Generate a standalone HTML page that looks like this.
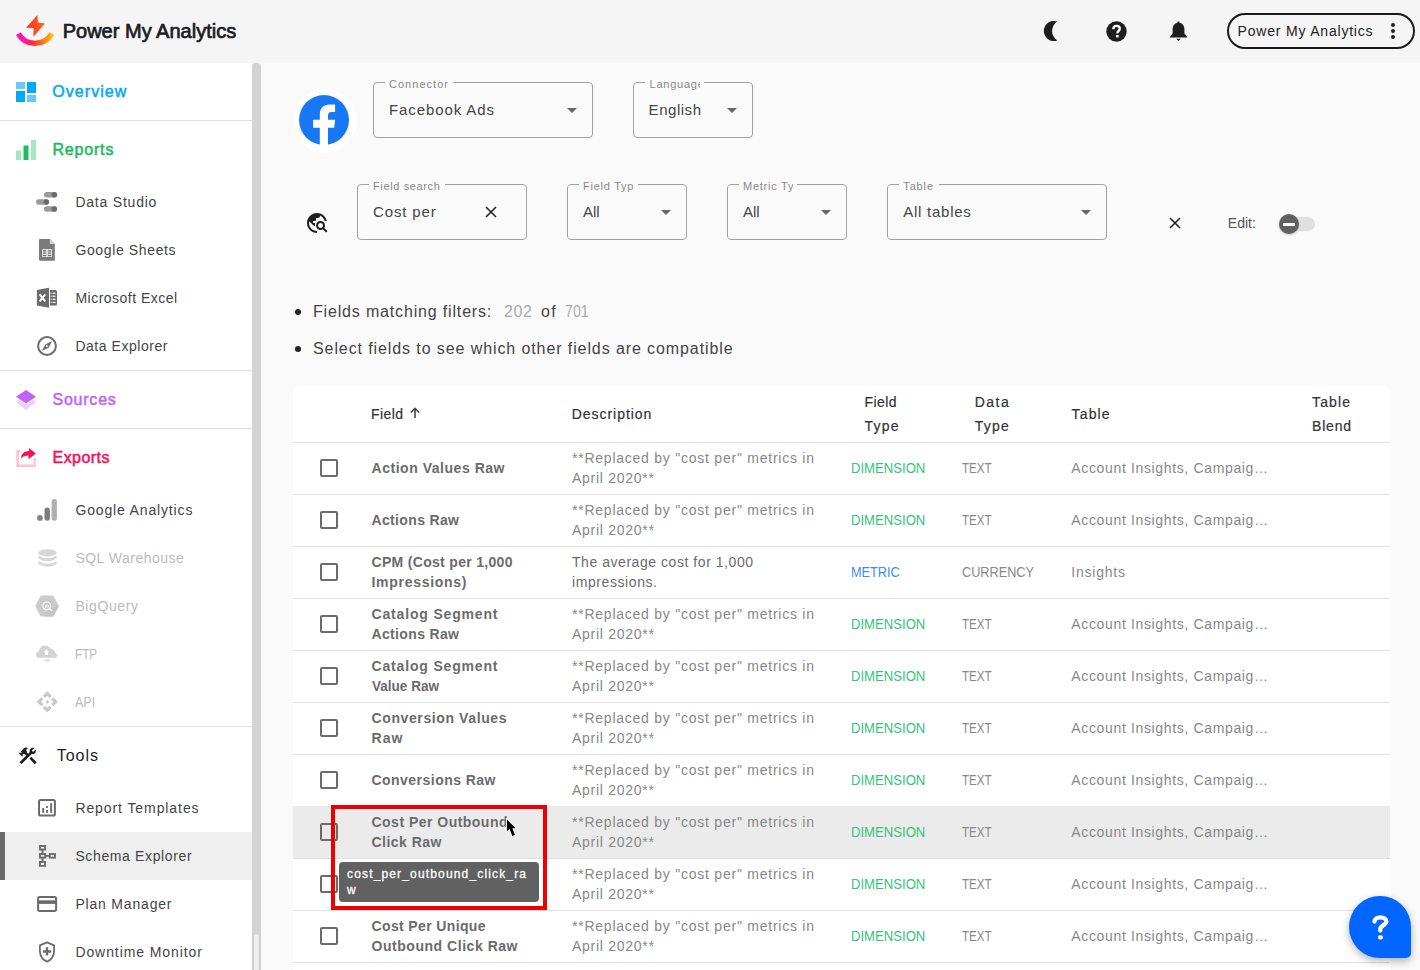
<!DOCTYPE html>
<html><head><meta charset="utf-8"><style>
html,body{margin:0;padding:0;}
body{width:1420px;height:970px;overflow:hidden;position:relative;background:#fafafa;font-family:"Liberation Sans",sans-serif;}
.t{position:absolute;white-space:pre;line-height:1;}
.a{position:absolute;}
</style></head><body>
<!-- header -->
<div class="a" style="left:0;top:0;width:1420px;height:63px;background:#f5f5f5"></div>
<svg class="a" style="left:14px;top:13px" width="44" height="36" viewBox="0 0 44 36">
 <defs><linearGradient id="lg1" x1="0" y1="0" x2="1" y2="0"><stop offset="0" stop-color="#ff0fd0"/><stop offset="0.45" stop-color="#ff2a3a"/><stop offset="1" stop-color="#ffb800"/></linearGradient>
 <linearGradient id="lg2" x1="0" y1="0" x2="1" y2="0"><stop offset="0" stop-color="#ff2d2d"/><stop offset="1" stop-color="#ff6a10"/></linearGradient></defs>
 <path d="M4.3 20.6 A19.2 19.2 0 0 0 37.7 20.6" stroke="url(#lg1)" stroke-width="5.4" fill="none"/>
 <path d="M23.5 1.9 L23.9 9.6 L31 10.4 L19.4 23.7 L19.6 14.9 L12.1 14.7 Z" fill="url(#lg2)"/>
</svg>
<!-- moon -->
<svg class="a" style="left:1042px;top:21px" width="17" height="20" viewBox="0 0 17 20"><path d="M15.2 0.6 A10 10 0 1 0 15.2 19.4 A11.2 11.2 0 0 1 15.2 0.6 Z" fill="#1e1e1e"/></svg>
<!-- help -->
<svg class="a" style="left:1106px;top:21px" width="21" height="21" viewBox="0 0 21 21"><circle cx="10.5" cy="10.5" r="10.2" fill="#1e1e1e"/>
<path d="M7.3 8.2 C7.3 6 8.8 4.9 10.6 4.9 C12.5 4.9 13.8 6.1 13.8 7.7 C13.8 9.7 11.4 10 11.4 12.2" stroke="#fff" stroke-width="2.3" fill="none"/><rect x="10.1" y="13.9" width="2.6" height="2.5" fill="#fff"/></svg>
<!-- bell -->
<svg class="a" style="left:1169px;top:21px" width="19" height="21" viewBox="0 0 19 21"><path d="M9.5 0.5 C10.3 0.5 10.6 1 10.6 1.8 C13.5 2.4 15.4 5 15.4 8 L15.4 12.5 L18.4 16.6 L0.6 16.6 L3.6 12.5 L3.6 8 C3.6 5 5.5 2.4 8.4 1.8 C8.4 1 8.7 0.5 9.5 0.5 Z" fill="#1e1e1e"/><path d="M7.3 17.8 L11.7 17.8 L9.5 20 Z" fill="#1e1e1e"/></svg>
<!-- account pill -->
<div class="a" style="left:1227px;top:13px;width:184px;height:32px;border:2px solid #1a1a1a;border-radius:18px"></div>
<div class="a" style="left:1391px;top:23px;width:4px;height:4px;border-radius:50%;background:#222"></div>
<div class="a" style="left:1391px;top:29px;width:4px;height:4px;border-radius:50%;background:#222"></div>
<div class="a" style="left:1391px;top:35px;width:4px;height:4px;border-radius:50%;background:#222"></div>

<!-- sidebar -->
<div class="a" style="left:0;top:63px;width:252px;height:907px;background:#fff"></div>
<div class="a" style="left:252px;top:63px;width:9px;height:870px;background:#d3d3d3;border-radius:4px 4px 0 0"></div>
<div class="a" style="left:252px;top:933px;width:9px;height:37px;background:#d0d0d0"></div>
<div class="a" style="left:254px;top:934px;width:5px;height:36px;background:#eeeeee;border-radius:2px 2px 0 0"></div>
<div class="a" style="left:0;top:120px;width:252px;height:1px;background:#e0e0e0"></div>
<div class="a" style="left:0;top:370px;width:252px;height:1px;background:#e0e0e0"></div>
<div class="a" style="left:0;top:428px;width:252px;height:1px;background:#e0e0e0"></div>
<div class="a" style="left:0;top:726px;width:252px;height:1px;background:#e0e0e0"></div>
<div class="a" style="left:0;top:832px;width:252px;height:48px;background:#efefef"></div>
<div class="a" style="left:0;top:832px;width:5px;height:48px;background:#6b6b6b"></div>

<!-- overview icon -->
<svg class="a" style="left:16px;top:82px" width="20" height="20" viewBox="0 0 20 20">
<rect x="0" y="0" width="9" height="7" fill="#6ac7fc"/><rect x="11" y="0" width="9" height="11" fill="#03a9f4"/>
<rect x="0" y="9" width="9" height="11" fill="#03a9f4"/><rect x="11" y="13" width="9" height="7" fill="#6ac7fc"/></svg>
<!-- reports icon -->
<svg class="a" style="left:16px;top:140px" width="20" height="20" viewBox="0 0 20 20">
<rect x="0" y="10.5" width="5" height="9.5" fill="#a3e6c0"/><rect x="7.5" y="5.5" width="5" height="14.5" fill="#1ebd63"/><rect x="15" y="0" width="5" height="20" fill="#a3e6c0"/></svg>
<!-- data studio -->
<svg class="a" style="left:36px;top:192px" width="22" height="20" viewBox="0 0 22 20">
<rect x="8" y="0" width="13" height="5.5" rx="2.75" fill="#9a9a9a"/><circle cx="18.3" cy="2.75" r="2.75" fill="#6b6b6b"/>
<rect x="0" y="7.2" width="13" height="5.5" rx="2.75" fill="#9a9a9a"/><circle cx="10.3" cy="9.95" r="2.75" fill="#6b6b6b"/>
<rect x="8" y="14.3" width="13" height="5.5" rx="2.75" fill="#9a9a9a"/><circle cx="18.3" cy="17.05" r="2.75" fill="#6b6b6b"/></svg>
<!-- google sheets -->
<svg class="a" style="left:39px;top:239px" width="16" height="22" viewBox="0 0 16 22">
<path d="M1.2 0 L10.9 0 L15.8 5.1 L15.8 20.5 Q15.8 21.7 14.6 21.7 L1.2 21.7 Q0 21.7 0 20.5 L0 1.2 Q0 0 1.2 0 Z" fill="#7a7a7a"/><path d="M10.9 0 L15.8 5.1 L10.9 5.1 Z" fill="#d4d4d4"/>
<rect x="3.1" y="10" width="10" height="7.9" rx="0.5" fill="#e6e6e6"/><rect x="4" y="11.2" width="3.3" height="1.3" fill="#6a6a6a"/><rect x="8.9" y="11.2" width="3.3" height="1.3" fill="#6a6a6a"/>
<rect x="4" y="13.4" width="3.3" height="1.6" fill="#8a8a8a"/><rect x="8.9" y="13.4" width="3.3" height="1.6" fill="#8a8a8a"/><rect x="4" y="16" width="3.3" height="1.2" fill="#6a6a6a"/><rect x="8.9" y="16" width="3.3" height="1.2" fill="#6a6a6a"/></svg>
<!-- excel -->
<svg class="a" style="left:36px;top:287px" width="22" height="22" viewBox="0 0 22 22">
<path d="M0.9 2.9 L13 0.8 L13 20.7 L0.9 18.6 Z" fill="#6b6b6b"/><path d="M14 2.9 L19.5 2.9 Q21 2.9 21 4.4 L21 17.1 Q21 18.6 19.5 18.6 L14 18.6 Z" fill="#6b6b6b"/>
<g fill="#fff"><rect x="14.6" y="5.6" width="1" height="1.2"/><rect x="16.6" y="5.6" width="2.9" height="1.2"/><rect x="14.6" y="8.6" width="1" height="1.2"/><rect x="16.6" y="8.6" width="2.9" height="1.2"/>
<rect x="14.6" y="11.7" width="1" height="1.2"/><rect x="16.6" y="11.7" width="2.9" height="1.2"/><rect x="14.6" y="14.8" width="1" height="1.2"/><rect x="16.6" y="14.8" width="2.9" height="1.2"/></g>
<path d="M3.6 7.4 L9.2 14.4 M9.2 7.4 L3.6 14.4" stroke="#fff" stroke-width="2"/></svg>
<!-- data explorer compass -->
<svg class="a" style="left:37px;top:336px" width="20" height="20" viewBox="0 0 20 20">
<circle cx="10" cy="10" r="8.9" stroke="#6b6b6b" stroke-width="2" fill="none"/><path d="M15 5.1 L11.6 11.8 L4.8 15 L8.2 8.4 Z" fill="#6b6b6b"/><circle cx="9.9" cy="10.1" r="1" fill="#fff"/></svg>
<!-- sources -->
<svg class="a" style="left:15px;top:389px" width="23" height="22" viewBox="0 0 23 22">
<path d="M1 13 L11 6.2 L21.2 13 L11 21 Z" fill="#ecd0fd"/><path d="M-0.2 7.7 L11 0 L22.4 7.7 L11 15.6 Z" fill="#fff"/><path d="M1.1 7.7 L11 0.9 L21 7.7 L11 14.5 Z" fill="#c062fb"/></svg>
<!-- exports -->
<svg class="a" style="left:16px;top:447px" width="21" height="21" viewBox="0 0 21 21">
<g fill="#ffc2d6"><rect x="0.4" y="3.2" width="2.5" height="16.8"/><rect x="0.4" y="3.2" width="4.2" height="2.3"/><rect x="0.4" y="17.5" width="19.4" height="2.5"/><rect x="17.3" y="11.3" width="2.5" height="8.7"/></g>
<path d="M5 11.6 C5.2 6.5 8.5 4.2 13.1 4.1 L13.1 0.9 L19.8 6.4 L12.5 12.2 L12.5 8.6 C9 8.6 6.8 9.4 5 11.6 Z" fill="#ff0a54"/></svg>
<!-- google analytics -->
<svg class="a" style="left:37px;top:499px" width="21" height="22" viewBox="0 0 21 22">
<circle cx="2.9" cy="18.9" r="2.9" fill="#848484"/><rect x="7.5" y="8.4" width="5.4" height="13.3" rx="2.7" fill="#7c7c7c"/><rect x="14.6" y="0.1" width="5.3" height="21.6" rx="2.65" fill="#b0b0b0"/></svg>
<!-- sql -->
<svg class="a" style="left:38px;top:549px" width="19" height="19" viewBox="0 0 19 19">
<ellipse cx="9.5" cy="3.8" rx="9.2" ry="3.6" fill="#d6d6d6"/><path d="M0.3 6.5 Q9.5 12 18.7 6.5 L18.7 9.5 Q9.5 15 0.3 9.5 Z" fill="#d6d6d6"/><path d="M0.3 12.2 Q9.5 17.5 18.7 12.2 L18.7 15 Q9.5 20.5 0.3 15 Z" fill="#d6d6d6"/></svg>
<!-- bigquery -->
<svg class="a" style="left:35px;top:595px" width="24" height="22" viewBox="0 0 24 22">
<path d="M0.2 11 L5.8 0.5 L18.2 0.5 L23.9 11 L18.2 21.5 L5.8 21.5 Z" fill="#cbcbcb"/><path d="M14.5 13.5 L23.9 11 L18.2 21.5 L9 21.5 Z" fill="#c4c4c4"/>
<circle cx="11.7" cy="10.8" r="3.8" stroke="#fff" stroke-width="1.1" fill="#c8c8c8"/><path d="M14.4 13.5 L16.8 15.8" stroke="#fff" stroke-width="1.2" stroke-linecap="round"/>
<rect x="10" y="10.6" width="0.9" height="2" fill="#fff"/><rect x="11.4" y="9.3" width="0.9" height="3.3" fill="#fff"/><rect x="12.8" y="10.1" width="0.9" height="2.5" fill="#fff"/></svg>
<!-- ftp -->
<svg class="a" style="left:36px;top:645px" width="22" height="18" viewBox="0 0 22 18">
<path d="M3 12.7 C1.3 12.7 0 11.4 0 9.7 C0 8 1.2 6.7 2.8 6.5 C3.3 3 5.8 0.4 8.8 0.4 C11.3 0.4 13.3 1.8 14.3 3.4 C17 3.5 18.7 5.5 19 7.8 C20.3 8.3 21.2 9.4 21.2 10.5 C21.2 11.8 20.2 12.7 18.8 12.7 Z" fill="#d2d2d2"/>
<path d="M10.5 3.8 L13 7 L12 7 L12 10 L8.9 10 L8.9 7 L7.8 7 Z" fill="#fff"/><rect x="8.2" y="14.2" width="5.6" height="2.6" fill="#e4e4e4"/></svg>
<!-- api -->
<svg class="a" style="left:36px;top:690px" width="23" height="24" viewBox="0 0 23 24"><path d="M11.30 1.20 L6.80 5.70 L9.10 7.95 L11.30 5.75 L13.50 7.95 L15.80 5.70 Z M21.90 11.80 L17.40 7.30 L15.15 9.60 L17.35 11.80 L15.15 14.00 L17.40 16.30 Z M11.30 22.40 L15.80 17.90 L13.50 15.65 L11.30 17.85 L9.10 15.65 L6.80 17.90 Z M0.70 11.80 L5.20 16.30 L7.45 14.00 L5.25 11.80 L7.45 9.60 L5.20 7.30 Z M11.3 9.9 L13.200000000000001 11.8 L11.3 13.700000000000001 L9.4 11.8 Z" fill="#c8c8c8"/></svg>
<!-- tools -->
<svg class="a" style="left:16.7px;top:744.5px" width="21.6" height="21.6" viewBox="0 0 24 24"><path fill="#1e1e1e" d="M13.78 15.3L19.78 21.3L21.89 19.14L15.89 13.14L13.78 15.3M17.5 10.1C17.11 10.1 16.69 10.05 16.36 9.91L4.97 21.25L2.86 19.14L10.27 11.74L8.5 9.96L7.78 10.66L6.33 9.25V12.11L5.63 12.81L2.11 9.25L2.81 8.55H5.62L4.22 7.14L7.78 3.58C8.95 2.41 10.83 2.41 12 3.58L9.89 5.740L11.3 7.14L10.59 7.85L12.38 9.63L14.2 7.75C14.06 7.42 14 7 14 6.63C14 4.66 15.56 3.11 17.5 3.11C18.09 3.11 18.61 3.25 19.08 3.53L16.41 6.2L17.91 7.7L20.58 5.03C20.86 5.5 21 6 21 6.63C21 8.55 19.45 10.1 17.5 10.1Z"/></svg>
<!-- report templates -->
<svg class="a" style="left:38px;top:799px" width="18" height="18" viewBox="0 0 18 18">
<rect x="1" y="1" width="15.9" height="15.6" rx="1.6" stroke="#6b6b6b" stroke-width="2" fill="none"/><rect x="4.2" y="9.1" width="1.9" height="4.7" fill="#6b6b6b"/><rect x="8.1" y="11" width="1.9" height="2.8" fill="#6b6b6b"/><rect x="8.1" y="7.1" width="1.9" height="1.9" fill="#6b6b6b"/><rect x="12.2" y="4.2" width="1.9" height="9.6" fill="#6b6b6b"/></svg>
<!-- schema explorer -->
<svg class="a" style="left:38px;top:844px" width="19" height="24" viewBox="0 0 19 24">
<g stroke="#6b6b6b" stroke-width="1.9" fill="none"><rect x="1.95" y="1.95" width="5.2" height="3.6"/><rect x="1.95" y="10.05" width="5.2" height="3.6"/><rect x="1.95" y="17.95" width="5.2" height="3.9"/><rect x="11.75" y="10.05" width="5.2" height="3.6"/>
<path d="M4.5 5.5 L4.5 10 M4.5 13.6 L4.5 18 M7.1 11.85 L11.8 11.85"/></g></svg>
<!-- plan manager -->
<svg class="a" style="left:37px;top:895px" width="21" height="18" viewBox="0 0 21 18">
<rect x="1.1" y="1.9" width="18" height="14" rx="1.6" stroke="#6b6b6b" stroke-width="2" fill="none"/><rect x="1" y="5.3" width="18.2" height="3.6" fill="#6b6b6b"/></svg>
<!-- downtime monitor shield -->
<svg class="a" style="left:38px;top:941px" width="18" height="22" viewBox="0 0 18 22">
<path d="M9 1.3 L16.1 4.3 L16.1 10.3 C16.1 15 13.1 19.3 9 20.6 C4.9 19.3 1.9 15 1.9 10.3 L1.9 4.3 Z" stroke="#6b6b6b" stroke-width="1.8" fill="none" stroke-linejoin="round"/><path d="M7.8 6.2 L10.2 6.2 L10.2 9.3 L13.2 9.3 L13.2 11.7 L10.2 11.7 L10.2 14.4 L7.8 14.4 L7.8 11.7 L5 11.7 L5 9.3 L7.8 9.3 Z" fill="#6b6b6b"/></svg>

<!-- facebook -->
<div class="a" style="left:293px;top:88.5px;width:64px;height:64px;border-radius:50%;background:#fff"></div>
<svg class="a" style="left:299px;top:95px" width="50" height="50" viewBox="0 0 50 50">
<circle cx="25" cy="25" r="25" fill="#1877f2"/>
<path d="M29 50 L29 32.8 L35.2 32.8 L36.1 24.8 L29 24.8 L29 20.5 C29 18.6 30 17 32.5 17 L36.1 17 L36.1 9.6 C36.1 9.6 33 9.4 31 9.4 C24.8 9.4 20.8 13 20.8 19.5 L20.8 24.8 L14.1 24.8 L14.1 32.8 L20.8 32.8 L20.8 50 Z" fill="#fff"/></svg>

<!-- outlined fields -->
<div class="a" style="left:373px;top:82px;width:218px;height:54px;border:1px solid #a0a0a0;border-radius:4px"></div>
<div class="a" style="left:384.5px;top:79px;width:68.0px;height:6px;background:#fafafa"></div>
<div class="a" style="left:633px;top:82px;width:118px;height:54px;border:1px solid #a0a0a0;border-radius:4px"></div>
<div class="a" style="left:644.9px;top:79px;width:59.200000000000045px;height:6px;background:#fafafa"></div>
<div class="a" style="left:649.6px;top:75.9px;width:50.1px;height:17px;overflow:hidden"><span style="position:absolute;left:0;top:3px;font-size:11px;line-height:1;color:#888;white-space:pre;letter-spacing:0.75px">Language</span></div>
<div class="a" style="left:357px;top:184px;width:168px;height:54px;border:1px solid #a0a0a0;border-radius:4px"></div>
<div class="a" style="left:368.5px;top:181px;width:76.0px;height:6px;background:#fafafa"></div>
<div class="a" style="left:567px;top:184px;width:118px;height:54px;border:1px solid #a0a0a0;border-radius:4px"></div>
<div class="a" style="left:578.5px;top:181px;width:59.5px;height:6px;background:#fafafa"></div>
<div class="a" style="left:583px;top:177.9px;width:50.8px;height:17px;overflow:hidden"><span style="position:absolute;left:0;top:3px;font-size:11px;line-height:1;color:#888;white-space:pre;letter-spacing:0.75px">Field Type</span></div>
<div class="a" style="left:727px;top:184px;width:118px;height:54px;border:1px solid #a0a0a0;border-radius:4px"></div>
<div class="a" style="left:738.5px;top:181px;width:58.5px;height:6px;background:#fafafa"></div>
<div class="a" style="left:743px;top:177.9px;width:49.8px;height:17px;overflow:hidden"><span style="position:absolute;left:0;top:3px;font-size:11px;line-height:1;color:#888;white-space:pre;letter-spacing:0.75px">Metric Type</span></div>
<div class="a" style="left:887px;top:184px;width:218px;height:54px;border:1px solid #a0a0a0;border-radius:4px"></div>
<div class="a" style="left:898.5px;top:181px;width:40.0px;height:6px;background:#fafafa"></div>
<!-- dropdown arrows -->
<svg class="a" style="left:567px;top:108px" width="10" height="5"><path d="M0 0 L10 0 L5 5 Z" fill="#666"/></svg>
<svg class="a" style="left:727px;top:108px" width="10" height="5"><path d="M0 0 L10 0 L5 5 Z" fill="#666"/></svg>
<svg class="a" style="left:661px;top:210px" width="10" height="5"><path d="M0 0 L10 0 L5 5 Z" fill="#666"/></svg>
<svg class="a" style="left:821px;top:210px" width="10" height="5"><path d="M0 0 L10 0 L5 5 Z" fill="#666"/></svg>
<svg class="a" style="left:1081px;top:210px" width="10" height="5"><path d="M0 0 L10 0 L5 5 Z" fill="#666"/></svg>
<!-- clear X in search -->
<svg class="a" style="left:485px;top:206px" width="12" height="12"><path d="M1 1 L11 11 M11 1 L1 11" stroke="#222" stroke-width="1.6"/></svg>
<!-- close X -->
<svg class="a" style="left:1169px;top:217px" width="12" height="12"><path d="M1 1 L11 11 M11 1 L1 11" stroke="#222" stroke-width="1.6"/></svg>
<!-- search-globe icon -->
<svg class="a" style="left:305.4px;top:211.1px" width="24" height="24" viewBox="0 0 24 24"><path fill="#1e1e1e" d="M19.3 16.9c.4-.7.7-1.5.7-2.4 0-2.5-2-4.5-4.5-4.5S11 12 11 14.5s2 4.5 4.5 4.5c.9 0 1.7-.3 2.4-.7l3.2 3.2 1.4-1.4-3.2-3.2zm-3.8.1c-1.4 0-2.5-1.1-2.5-2.5s1.1-2.5 2.5-2.5 2.5 1.1 2.5 2.5-1.1 2.5-2.5 2.5zM12 20v2C6.48 22 2 17.52 2 12S6.48 2 12 2c4.84 0 8.87 3.44 9.8 8h-2.07c-.64-2.46-2.4-4.47-4.73-5.41V5c0 1.1-.9 2-2 2h-2v2c0 .55-.45 1-1 1H8v2h2v3H9l-4.79-4.79C4.08 10.79 4 11.38 4 12c0 4.41 3.59 8 8 8z"/></svg>
<!-- toggle -->
<div class="a" style="left:1281px;top:217px;width:34px;height:14px;border-radius:7px;background:#e0e0e0"></div>
<div class="a" style="left:1279px;top:214px;width:20px;height:20px;border-radius:50%;background:#616161;box-shadow:0 1px 2px rgba(0,0,0,0.25)"></div>
<div class="a" style="left:1283px;top:222.5px;width:12px;height:3px;background:#fff"></div>

<!-- bullets -->
<div class="a" style="left:295px;top:309px;width:6px;height:6px;border-radius:50%;background:#222"></div>
<div class="a" style="left:295px;top:345.5px;width:6px;height:6px;border-radius:50%;background:#222"></div>

<!-- table card -->
<div class="a" style="left:293px;top:386px;width:1098px;height:600px;background:#fff;border-radius:8px"></div>
<div class="a" style="left:293px;top:442px;width:1097px;height:1px;background:#e0e0e0"></div>
<svg class="a" style="left:409px;top:407px" width="12" height="12" viewBox="0 0 12 12"><path d="M6 11 L6 1.5 M1.8 5.5 L6 1.3 L10.2 5.5" stroke="#444" stroke-width="1.6" fill="none"/></svg>
<div class="a" style="left:293px;top:494px;width:1097px;height:1px;background:#e0e0e0"></div>
<div class="a" style="left:320px;top:459px;width:14px;height:14px;border:2px solid #6b6b6b;border-radius:2px"></div>
<div class="a" style="left:293px;top:546px;width:1097px;height:1px;background:#e0e0e0"></div>
<div class="a" style="left:320px;top:511px;width:14px;height:14px;border:2px solid #6b6b6b;border-radius:2px"></div>
<div class="a" style="left:293px;top:598px;width:1097px;height:1px;background:#e0e0e0"></div>
<div class="a" style="left:320px;top:563px;width:14px;height:14px;border:2px solid #6b6b6b;border-radius:2px"></div>
<div class="a" style="left:293px;top:650px;width:1097px;height:1px;background:#e0e0e0"></div>
<div class="a" style="left:320px;top:615px;width:14px;height:14px;border:2px solid #6b6b6b;border-radius:2px"></div>
<div class="a" style="left:293px;top:702px;width:1097px;height:1px;background:#e0e0e0"></div>
<div class="a" style="left:320px;top:667px;width:14px;height:14px;border:2px solid #6b6b6b;border-radius:2px"></div>
<div class="a" style="left:293px;top:754px;width:1097px;height:1px;background:#e0e0e0"></div>
<div class="a" style="left:320px;top:719px;width:14px;height:14px;border:2px solid #6b6b6b;border-radius:2px"></div>
<div class="a" style="left:293px;top:806px;width:1097px;height:1px;background:#e0e0e0"></div>
<div class="a" style="left:320px;top:771px;width:14px;height:14px;border:2px solid #6b6b6b;border-radius:2px"></div>
<div class="a" style="left:293px;top:806px;width:1097px;height:52px;background:#ebebeb"></div>
<div class="a" style="left:293px;top:858px;width:1097px;height:1px;background:#e0e0e0"></div>
<div class="a" style="left:320px;top:823px;width:14px;height:14px;border:2px solid #6b6b6b;border-radius:2px"></div>
<div class="a" style="left:293px;top:910px;width:1097px;height:1px;background:#e0e0e0"></div>
<div class="a" style="left:320px;top:875px;width:14px;height:14px;border:2px solid #6b6b6b;border-radius:2px"></div>
<div class="a" style="left:293px;top:962px;width:1097px;height:1px;background:#e0e0e0"></div>
<div class="a" style="left:320px;top:927px;width:14px;height:14px;border:2px solid #6b6b6b;border-radius:2px"></div>

<!-- help FAB -->
<div class="a" style="left:1349px;top:896px;width:62px;height:62px;border-radius:31px 31px 5px 31px;background:#0066ff;box-shadow:0 3px 8px rgba(0,0,0,0.3)"></div>
<svg class="a" style="left:1369px;top:910px;z-index:6" width="24" height="32" viewBox="0 0 24 32"><path d="M5.5 11.5 C5.5 8.9 8 7.3 11.4 7.3 C14.8 7.3 17.3 9.2 17.3 11.8 C17.3 14.8 11.3 15.6 11.3 19 L11.3 20.5" stroke="#fff" stroke-width="4.3" fill="none" stroke-linecap="round"/><rect x="8.9" y="25.2" width="5.1" height="4.4" rx="2" fill="#fff"/></svg>

<!-- overlay: red box + tooltip + cursor -->
<div class="a" style="left:331px;top:805px;width:208px;height:97px;border:4px solid #ee0000;z-index:5"></div>
<div class="a" style="left:339px;top:862px;width:200px;height:40px;background:#616161;border-radius:4px;z-index:5"></div>
<svg class="a" style="left:505px;top:818px;z-index:6" width="14" height="21" viewBox="0 0 14 21"><path d="M1.9 1.3 L1.9 13.3 L4.6 10.9 L7.3 17.9 L10 16.9 L7.4 10.2 L10.6 10.2 Z" fill="#000" stroke="#fff" stroke-width="1.8" paint-order="stroke" stroke-linejoin="miter"/></svg>

<span id="t0" class="t" style="left:62.7px;top:20.97px;font-size:20px;font-weight:normal;color:#1b1b22;letter-spacing:0.006px;-webkit-text-stroke:0.7px #1b1b22">Power My Analytics</span>
<span id="t1" class="t" style="left:1237.6px;top:23.85px;font-size:14px;font-weight:normal;color:#222;letter-spacing:0.801px;">Power My Analytics</span>
<span id="t2" class="t" style="left:52.3px;top:84.06px;font-size:16px;font-weight:normal;color:#03a9f4;letter-spacing:1.045px;-webkit-text-stroke:0.5px #03a9f4">Overview</span>
<span id="t3" class="t" style="left:52.4px;top:142.26px;font-size:16px;font-weight:normal;color:#19b862;letter-spacing:0.828px;-webkit-text-stroke:0.5px #19b862">Reports</span>
<span id="t4" class="t" style="left:52.5px;top:392.06px;font-size:16px;font-weight:normal;color:#c062fb;letter-spacing:0.766px;-webkit-text-stroke:0.5px #c062fb">Sources</span>
<span id="t5" class="t" style="left:52.5px;top:450.26px;font-size:16px;font-weight:normal;color:#ff0a5a;letter-spacing:0.458px;-webkit-text-stroke:0.5px #ff0a5a">Exports</span>
<span id="t6" class="t" style="left:56.7px;top:748.46px;font-size:16px;font-weight:normal;color:#222;letter-spacing:0.985px;">Tools</span>
<span id="t7" class="t" style="left:75.4px;top:195.35px;font-size:14px;font-weight:normal;color:#444;letter-spacing:0.783px;">Data Studio</span>
<span id="t8" class="t" style="left:75.4px;top:243.45px;font-size:14px;font-weight:normal;color:#444;letter-spacing:0.631px;">Google Sheets</span>
<span id="t9" class="t" style="left:75.4px;top:291.15px;font-size:14px;font-weight:normal;color:#444;letter-spacing:0.491px;">Microsoft Excel</span>
<span id="t10" class="t" style="left:75.4px;top:339.45px;font-size:14px;font-weight:normal;color:#444;letter-spacing:0.534px;">Data Explorer</span>
<span id="t11" class="t" style="left:75.4px;top:502.75px;font-size:14px;font-weight:normal;color:#444;letter-spacing:0.847px;">Google Analytics</span>
<span id="t12" class="t" style="left:75.4px;top:550.75px;font-size:14px;font-weight:normal;color:#bbb;letter-spacing:0.503px;">SQL Warehouse</span>
<span id="t13" class="t" style="left:75.4px;top:598.75px;font-size:14px;font-weight:normal;color:#bbb;letter-spacing:0.592px;">BigQuery</span>
<span id="t14" class="t" style="left:75.4px;top:646.75px;font-size:14px;font-weight:normal;color:#bbb;letter-spacing:0.000px;transform:scaleX(0.8392);transform-origin:0 0;">FTP</span>
<span id="t15" class="t" style="left:75.4px;top:694.75px;font-size:14px;font-weight:normal;color:#bbb;letter-spacing:0.000px;transform:scaleX(0.8947);transform-origin:0 0;">API</span>
<span id="t16" class="t" style="left:75.4px;top:800.95px;font-size:14px;font-weight:normal;color:#444;letter-spacing:0.915px;">Report Templates</span>
<span id="t17" class="t" style="left:75.4px;top:848.95px;font-size:14px;font-weight:normal;color:#444;letter-spacing:0.629px;">Schema Explorer</span>
<span id="t18" class="t" style="left:75.4px;top:896.95px;font-size:14px;font-weight:normal;color:#444;letter-spacing:0.812px;">Plan Manager</span>
<span id="t19" class="t" style="left:75.4px;top:944.95px;font-size:14px;font-weight:normal;color:#444;letter-spacing:0.918px;">Downtime Monitor</span>
<span id="t20" class="t" style="left:389.0px;top:79.29px;font-size:11px;font-weight:normal;color:#888;letter-spacing:1.029px;">Connector</span>
<span id="t21" class="t" style="left:389.0px;top:102.30px;font-size:15px;font-weight:normal;color:#444;letter-spacing:0.903px;">Facebook Ads</span>
<span id="t22" class="t" style="left:648.6px;top:102.30px;font-size:15px;font-weight:normal;color:#444;letter-spacing:0.533px;">English</span>
<span id="t23" class="t" style="left:373.0px;top:181.29px;font-size:11px;font-weight:normal;color:#888;letter-spacing:0.625px;">Field search</span>
<span id="t24" class="t" style="left:373.0px;top:204.20px;font-size:15px;font-weight:normal;color:#444;letter-spacing:0.857px;">Cost per</span>
<span id="t25" class="t" style="left:583.0px;top:204.20px;font-size:15px;font-weight:normal;color:#444;letter-spacing:-0.086px;">All</span>
<span id="t26" class="t" style="left:743.0px;top:204.20px;font-size:15px;font-weight:normal;color:#444;letter-spacing:-0.086px;">All</span>
<span id="t27" class="t" style="left:903.3px;top:181.29px;font-size:11px;font-weight:normal;color:#888;letter-spacing:0.851px;">Table</span>
<span id="t28" class="t" style="left:903.3px;top:204.20px;font-size:15px;font-weight:normal;color:#444;letter-spacing:0.736px;">All tables</span>
<span id="t29" class="t" style="left:1227.8px;top:215.95px;font-size:14px;font-weight:normal;color:#555;letter-spacing:-0.004px;">Edit:</span>
<span id="t30" class="t" style="left:313.0px;top:304.16px;font-size:16px;font-weight:normal;color:#444;letter-spacing:0.832px;">Fields matching filters:</span>
<span id="t31" class="t" style="left:504.0px;top:304.16px;font-size:16px;font-weight:normal;color:#aaa;letter-spacing:0.648px;">202</span>
<span id="t32" class="t" style="left:541.0px;top:304.16px;font-size:16px;font-weight:normal;color:#444;letter-spacing:1.356px;">of</span>
<span id="t33" class="t" style="left:565.0px;top:304.16px;font-size:16px;font-weight:normal;color:#aaa;letter-spacing:0.000px;transform:scaleX(0.8875);transform-origin:0 0;">701</span>
<span id="t34" class="t" style="left:313.0px;top:340.76px;font-size:16px;font-weight:normal;color:#444;letter-spacing:0.903px;">Select fields to see which other fields are compatible</span>
<span id="t35" class="t" style="left:371.0px;top:407.15px;font-size:14px;font-weight:normal;color:#333;letter-spacing:0.410px;-webkit-text-stroke:0.2px #333">Field</span>
<span id="t36" class="t" style="left:571.8px;top:407.15px;font-size:14px;font-weight:normal;color:#333;letter-spacing:0.947px;-webkit-text-stroke:0.2px #333">Description</span>
<span id="t37" class="t" style="left:864.6px;top:395.15px;font-size:14px;font-weight:normal;color:#333;letter-spacing:0.410px;-webkit-text-stroke:0.2px #333">Field</span>
<span id="t38" class="t" style="left:864.6px;top:419.15px;font-size:14px;font-weight:normal;color:#333;letter-spacing:1.214px;-webkit-text-stroke:0.2px #333">Type</span>
<span id="t39" class="t" style="left:974.7px;top:395.15px;font-size:14px;font-weight:normal;color:#333;letter-spacing:1.474px;-webkit-text-stroke:0.2px #333">Data</span>
<span id="t40" class="t" style="left:974.7px;top:419.15px;font-size:14px;font-weight:normal;color:#333;letter-spacing:1.214px;-webkit-text-stroke:0.2px #333">Type</span>
<span id="t41" class="t" style="left:1071.6px;top:407.15px;font-size:14px;font-weight:normal;color:#333;letter-spacing:1.133px;-webkit-text-stroke:0.2px #333">Table</span>
<span id="t42" class="t" style="left:1312.0px;top:395.15px;font-size:14px;font-weight:normal;color:#333;letter-spacing:1.133px;-webkit-text-stroke:0.2px #333">Table</span>
<span id="t43" class="t" style="left:1312.0px;top:419.15px;font-size:14px;font-weight:normal;color:#333;letter-spacing:0.797px;-webkit-text-stroke:0.2px #333">Blend</span>
<span id="t44" class="t" style="left:371.5px;top:461.15px;font-size:14px;font-weight:bold;color:#6b6b6b;letter-spacing:0.532px;">Action Values Raw</span>
<span id="t45" class="t" style="left:572.0px;top:451.05px;font-size:14px;font-weight:normal;color:#888;letter-spacing:0.761px;">**Replaced by "cost per" metrics in</span>
<span id="t46" class="t" style="left:572.0px;top:471.05px;font-size:14px;font-weight:normal;color:#888;letter-spacing:0.733px;">April 2020**</span>
<span id="t47" class="t" style="left:851.0px;top:461.15px;font-size:14px;font-weight:normal;color:#36c47a;letter-spacing:0.000px;transform:scaleX(0.9364);transform-origin:0 0;">DIMENSION</span>
<span id="t48" class="t" style="left:962.2px;top:461.15px;font-size:14px;font-weight:normal;color:#888;letter-spacing:0.000px;transform:scaleX(0.8272);transform-origin:0 0;">TEXT</span>
<span id="t49" class="t" style="left:1071.3px;top:461.15px;font-size:14px;font-weight:normal;color:#888;letter-spacing:0.647px;">Account Insights, Campaig…</span>
<span id="t50" class="t" style="left:371.5px;top:513.15px;font-size:14px;font-weight:bold;color:#6b6b6b;letter-spacing:0.348px;">Actions Raw</span>
<span id="t51" class="t" style="left:572.0px;top:503.05px;font-size:14px;font-weight:normal;color:#888;letter-spacing:0.761px;">**Replaced by "cost per" metrics in</span>
<span id="t52" class="t" style="left:572.0px;top:523.05px;font-size:14px;font-weight:normal;color:#888;letter-spacing:0.733px;">April 2020**</span>
<span id="t53" class="t" style="left:851.0px;top:513.15px;font-size:14px;font-weight:normal;color:#36c47a;letter-spacing:0.000px;transform:scaleX(0.9364);transform-origin:0 0;">DIMENSION</span>
<span id="t54" class="t" style="left:962.2px;top:513.15px;font-size:14px;font-weight:normal;color:#888;letter-spacing:0.000px;transform:scaleX(0.8272);transform-origin:0 0;">TEXT</span>
<span id="t55" class="t" style="left:1071.3px;top:513.15px;font-size:14px;font-weight:normal;color:#888;letter-spacing:0.647px;">Account Insights, Campaig…</span>
<span id="t56" class="t" style="left:371.5px;top:554.95px;font-size:14px;font-weight:bold;color:#6b6b6b;letter-spacing:0.312px;">CPM (Cost per 1,000</span>
<span id="t57" class="t" style="left:371.5px;top:574.95px;font-size:14px;font-weight:bold;color:#6b6b6b;letter-spacing:0.714px;">Impressions)</span>
<span id="t58" class="t" style="left:572.0px;top:555.05px;font-size:14px;font-weight:normal;color:#6b6b6b;letter-spacing:0.547px;">The average cost for 1,000</span>
<span id="t59" class="t" style="left:572.0px;top:575.05px;font-size:14px;font-weight:normal;color:#6b6b6b;letter-spacing:0.582px;">impressions.</span>
<span id="t60" class="t" style="left:851.0px;top:565.15px;font-size:14px;font-weight:normal;color:#3d8bfd;letter-spacing:0.000px;transform:scaleX(0.9092);transform-origin:0 0;">METRIC</span>
<span id="t61" class="t" style="left:962.2px;top:565.15px;font-size:14px;font-weight:normal;color:#888;letter-spacing:0.000px;transform:scaleX(0.9074);transform-origin:0 0;">CURRENCY</span>
<span id="t62" class="t" style="left:1071.3px;top:565.15px;font-size:14px;font-weight:normal;color:#888;letter-spacing:0.764px;">Insights</span>
<span id="t63" class="t" style="left:371.5px;top:606.95px;font-size:14px;font-weight:bold;color:#6b6b6b;letter-spacing:0.831px;">Catalog Segment</span>
<span id="t64" class="t" style="left:371.5px;top:626.95px;font-size:14px;font-weight:bold;color:#6b6b6b;letter-spacing:0.348px;">Actions Raw</span>
<span id="t65" class="t" style="left:572.0px;top:607.05px;font-size:14px;font-weight:normal;color:#888;letter-spacing:0.761px;">**Replaced by "cost per" metrics in</span>
<span id="t66" class="t" style="left:572.0px;top:627.05px;font-size:14px;font-weight:normal;color:#888;letter-spacing:0.733px;">April 2020**</span>
<span id="t67" class="t" style="left:851.0px;top:617.15px;font-size:14px;font-weight:normal;color:#36c47a;letter-spacing:0.000px;transform:scaleX(0.9364);transform-origin:0 0;">DIMENSION</span>
<span id="t68" class="t" style="left:962.2px;top:617.15px;font-size:14px;font-weight:normal;color:#888;letter-spacing:0.000px;transform:scaleX(0.8272);transform-origin:0 0;">TEXT</span>
<span id="t69" class="t" style="left:1071.3px;top:617.15px;font-size:14px;font-weight:normal;color:#888;letter-spacing:0.647px;">Account Insights, Campaig…</span>
<span id="t70" class="t" style="left:371.5px;top:658.95px;font-size:14px;font-weight:bold;color:#6b6b6b;letter-spacing:0.831px;">Catalog Segment</span>
<span id="t71" class="t" style="left:371.5px;top:678.95px;font-size:14px;font-weight:bold;color:#6b6b6b;letter-spacing:0.000px;transform:scaleX(0.9673);transform-origin:0 0;">Value Raw</span>
<span id="t72" class="t" style="left:572.0px;top:659.05px;font-size:14px;font-weight:normal;color:#888;letter-spacing:0.761px;">**Replaced by "cost per" metrics in</span>
<span id="t73" class="t" style="left:572.0px;top:679.05px;font-size:14px;font-weight:normal;color:#888;letter-spacing:0.733px;">April 2020**</span>
<span id="t74" class="t" style="left:851.0px;top:669.15px;font-size:14px;font-weight:normal;color:#36c47a;letter-spacing:0.000px;transform:scaleX(0.9364);transform-origin:0 0;">DIMENSION</span>
<span id="t75" class="t" style="left:962.2px;top:669.15px;font-size:14px;font-weight:normal;color:#888;letter-spacing:0.000px;transform:scaleX(0.8272);transform-origin:0 0;">TEXT</span>
<span id="t76" class="t" style="left:1071.3px;top:669.15px;font-size:14px;font-weight:normal;color:#888;letter-spacing:0.647px;">Account Insights, Campaig…</span>
<span id="t77" class="t" style="left:371.5px;top:710.95px;font-size:14px;font-weight:bold;color:#6b6b6b;letter-spacing:0.607px;">Conversion Values</span>
<span id="t78" class="t" style="left:371.5px;top:730.95px;font-size:14px;font-weight:bold;color:#6b6b6b;letter-spacing:1.102px;">Raw</span>
<span id="t79" class="t" style="left:572.0px;top:711.05px;font-size:14px;font-weight:normal;color:#888;letter-spacing:0.761px;">**Replaced by "cost per" metrics in</span>
<span id="t80" class="t" style="left:572.0px;top:731.05px;font-size:14px;font-weight:normal;color:#888;letter-spacing:0.733px;">April 2020**</span>
<span id="t81" class="t" style="left:851.0px;top:721.15px;font-size:14px;font-weight:normal;color:#36c47a;letter-spacing:0.000px;transform:scaleX(0.9364);transform-origin:0 0;">DIMENSION</span>
<span id="t82" class="t" style="left:962.2px;top:721.15px;font-size:14px;font-weight:normal;color:#888;letter-spacing:0.000px;transform:scaleX(0.8272);transform-origin:0 0;">TEXT</span>
<span id="t83" class="t" style="left:1071.3px;top:721.15px;font-size:14px;font-weight:normal;color:#888;letter-spacing:0.647px;">Account Insights, Campaig…</span>
<span id="t84" class="t" style="left:371.5px;top:773.15px;font-size:14px;font-weight:bold;color:#6b6b6b;letter-spacing:0.465px;">Conversions Raw</span>
<span id="t85" class="t" style="left:572.0px;top:763.05px;font-size:14px;font-weight:normal;color:#888;letter-spacing:0.761px;">**Replaced by "cost per" metrics in</span>
<span id="t86" class="t" style="left:572.0px;top:783.05px;font-size:14px;font-weight:normal;color:#888;letter-spacing:0.733px;">April 2020**</span>
<span id="t87" class="t" style="left:851.0px;top:773.15px;font-size:14px;font-weight:normal;color:#36c47a;letter-spacing:0.000px;transform:scaleX(0.9364);transform-origin:0 0;">DIMENSION</span>
<span id="t88" class="t" style="left:962.2px;top:773.15px;font-size:14px;font-weight:normal;color:#888;letter-spacing:0.000px;transform:scaleX(0.8272);transform-origin:0 0;">TEXT</span>
<span id="t89" class="t" style="left:1071.3px;top:773.15px;font-size:14px;font-weight:normal;color:#888;letter-spacing:0.647px;">Account Insights, Campaig…</span>
<span id="t90" class="t" style="left:371.5px;top:814.95px;font-size:14px;font-weight:bold;color:#6b6b6b;letter-spacing:0.479px;">Cost Per Outbound</span>
<span id="t91" class="t" style="left:371.5px;top:834.95px;font-size:14px;font-weight:bold;color:#6b6b6b;letter-spacing:0.482px;">Click Raw</span>
<span id="t92" class="t" style="left:572.0px;top:815.05px;font-size:14px;font-weight:normal;color:#888;letter-spacing:0.761px;">**Replaced by "cost per" metrics in</span>
<span id="t93" class="t" style="left:572.0px;top:835.05px;font-size:14px;font-weight:normal;color:#888;letter-spacing:0.733px;">April 2020**</span>
<span id="t94" class="t" style="left:851.0px;top:825.15px;font-size:14px;font-weight:normal;color:#36c47a;letter-spacing:0.000px;transform:scaleX(0.9364);transform-origin:0 0;">DIMENSION</span>
<span id="t95" class="t" style="left:962.2px;top:825.15px;font-size:14px;font-weight:normal;color:#888;letter-spacing:0.000px;transform:scaleX(0.8272);transform-origin:0 0;">TEXT</span>
<span id="t96" class="t" style="left:1071.3px;top:825.15px;font-size:14px;font-weight:normal;color:#888;letter-spacing:0.647px;">Account Insights, Campaig…</span>
<span id="t97" class="t" style="left:572.0px;top:867.05px;font-size:14px;font-weight:normal;color:#888;letter-spacing:0.761px;">**Replaced by "cost per" metrics in</span>
<span id="t98" class="t" style="left:572.0px;top:887.05px;font-size:14px;font-weight:normal;color:#888;letter-spacing:0.733px;">April 2020**</span>
<span id="t99" class="t" style="left:851.0px;top:877.15px;font-size:14px;font-weight:normal;color:#36c47a;letter-spacing:0.000px;transform:scaleX(0.9364);transform-origin:0 0;">DIMENSION</span>
<span id="t100" class="t" style="left:962.2px;top:877.15px;font-size:14px;font-weight:normal;color:#888;letter-spacing:0.000px;transform:scaleX(0.8272);transform-origin:0 0;">TEXT</span>
<span id="t101" class="t" style="left:1071.3px;top:877.15px;font-size:14px;font-weight:normal;color:#888;letter-spacing:0.647px;">Account Insights, Campaig…</span>
<span id="t102" class="t" style="left:371.5px;top:918.95px;font-size:14px;font-weight:bold;color:#6b6b6b;letter-spacing:0.364px;">Cost Per Unique</span>
<span id="t103" class="t" style="left:371.5px;top:938.95px;font-size:14px;font-weight:bold;color:#6b6b6b;letter-spacing:0.536px;">Outbound Click Raw</span>
<span id="t104" class="t" style="left:572.0px;top:919.05px;font-size:14px;font-weight:normal;color:#888;letter-spacing:0.761px;">**Replaced by "cost per" metrics in</span>
<span id="t105" class="t" style="left:572.0px;top:939.05px;font-size:14px;font-weight:normal;color:#888;letter-spacing:0.733px;">April 2020**</span>
<span id="t106" class="t" style="left:851.0px;top:929.15px;font-size:14px;font-weight:normal;color:#36c47a;letter-spacing:0.000px;transform:scaleX(0.9364);transform-origin:0 0;">DIMENSION</span>
<span id="t107" class="t" style="left:962.2px;top:929.15px;font-size:14px;font-weight:normal;color:#888;letter-spacing:0.000px;transform:scaleX(0.8272);transform-origin:0 0;">TEXT</span>
<span id="t108" class="t" style="left:1071.3px;top:929.15px;font-size:14px;font-weight:normal;color:#888;letter-spacing:0.647px;">Account Insights, Campaig…</span>
<span id="t109" class="t" style="left:347.0px;top:867.84px;font-size:12px;font-weight:normal;color:#fff;letter-spacing:1.156px;z-index:6;-webkit-text-stroke:0.3px #fff">cost_per_outbound_click_ra</span>
<span id="t110" class="t" style="left:347.0px;top:883.84px;font-size:12px;font-weight:normal;color:#fff;letter-spacing:0.000px;z-index:6;-webkit-text-stroke:0.3px #fff">w</span>
</body></html>
